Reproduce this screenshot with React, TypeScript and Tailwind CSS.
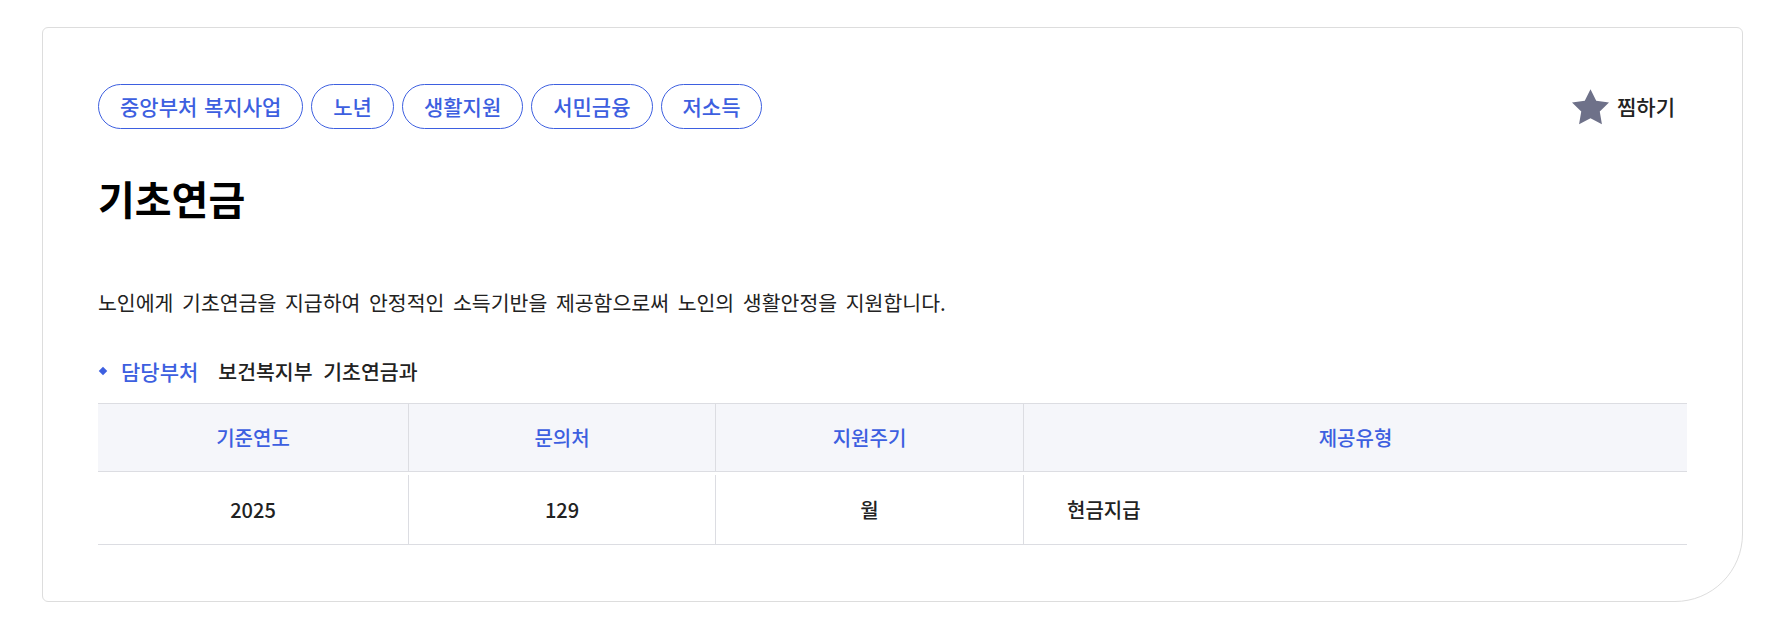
const tags = ["중앙부처 복지사업", "노년", "생활지원", "서민금융", "저소득"];

const info = [
  { label: "기준연도", value: "2025" },
  { label: "문의처", value: "129" },
  { label: "지원주기", value: "월" },
];

function StarIcon() {
  return (
    <svg viewBox="2 2 20 19.3" className="w-[37px] h-[36px]" fill="#6e7189">
      <polygon points="12,2 15.09,8.26 22,9.27 17,14.14 18.18,21.02 12,17.77 5.82,21.02 7,14.14 2,9.27 8.91,8.26" />
    </svg>
  );
}

export default function App() {
  return (
    <div
      className="min-h-[622px] bg-white pt-[27px] pl-[42px] text-[#222]"
      style={{ fontFamily: '"Noto Sans CJK KR", "Noto Sans", sans-serif' }}
    >
      <div className="w-[1701px] h-[575px] border border-[#dddddd] rounded-[6px] rounded-br-[68px] pt-[56px] px-[55px]">
        {/* tags + bookmark */}
        <div className="flex items-center justify-between">
          <div className="flex items-center gap-2">
            {tags.map((t) => (
              <span
                key={t}
                className="h-[45px] px-[21px] flex items-center rounded-full border border-[#3d5fe0] text-[#3d5fe0] text-[21px] font-medium leading-none [word-spacing:2px]"
              >
                {t}
              </span>
            ))}
          </div>
          <button className="flex items-center gap-2 mr-3 text-[21px] font-medium text-[#222]">
            <StarIcon />
            <span>찜하기</span>
          </button>
        </div>

        <h1 className="mt-[45px] text-[40px] leading-[48px] font-bold text-black">기초연금</h1>

        <p className="mt-[66px] text-[20.5px] leading-[28px] [word-spacing:4px]">
          노인에게 기초연금을 지급하여 안정적인 소득기반을 제공함으로써 노인의 생활안정을 지원합니다.
        </p>

        <div className="mt-[41px] flex items-center leading-[28px] font-medium">
          <span className="ml-[2px] w-[6px] h-[6px] rotate-45 bg-[#3d5fe0]" />
          <span className="ml-[15px] text-[21px] text-[#3d5fe0]">담당부처</span>
          <span className="ml-5 text-[20.5px] [word-spacing:6px]">보건복지부 기초연금과</span>
        </div>

        {/* info table */}
        <div className="mt-[18px]">
          <div className="grid grid-cols-[310px_307px_308px_1fr] border-t border-b border-[#dcdde2] bg-[#f5f6fa] h-[69px] text-[20px] font-medium text-[#3d5fe0]">
            {info.map((c, i) => (
              <div
                key={c.label}
                className={`flex items-center justify-center ${i > 0 ? "border-l border-[#dcdde2]" : ""}`}
              >
                {c.label}
              </div>
            ))}
            <div className="flex items-center justify-center border-l border-[#dcdde2]">제공유형</div>
          </div>
          <div className="grid grid-cols-[310px_307px_308px_1fr] pt-[3px] border-b border-[#dcdde2] text-[20px] font-medium text-[#222]">
            {info.map((c, i) => (
              <div
                key={c.label}
                className={`h-[69px] flex items-center justify-center ${i > 0 ? "border-l border-[#dcdde2]" : ""}`}
              >
                {c.value}
              </div>
            ))}
            <div className="h-[69px] flex items-center pl-[43px] border-l border-[#dcdde2]">현금지급</div>
          </div>
        </div>
      </div>
    </div>
  );
}
